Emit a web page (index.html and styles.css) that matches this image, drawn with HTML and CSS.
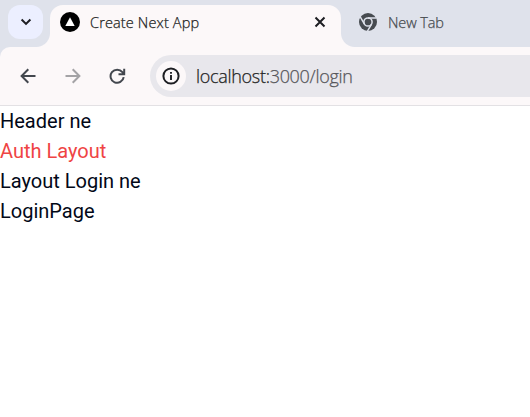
FILE: index.html
```html
<!DOCTYPE html>
<html lang="en">
<head>
<meta charset="utf-8">
<title>Create Next App</title>
<link rel="stylesheet" href="styles.css">
</head>
<body>
<header class="browser">
  <div class="tabs">
    <button class="tab-search" aria-label="Search tabs">
      <svg width="12" height="8" viewBox="0 0 12 8"><path d="M1.6 1.5 6 5.9l4.4-4.4" fill="none" stroke="#1d1e22" stroke-width="2"/></svg>
    </button>
    <div class="tab active">
      <svg class="favicon" width="20" height="20" viewBox="0 0 20 20"><circle cx="10" cy="10" r="10"/><path d="M10 5.2 14.7 14H5.3z" fill="#fff"/></svg>
      <span class="title title-active">Create Next App</span>
      <svg class="close" width="12" height="12" viewBox="0 0 12 12"><path d="m1.5 1.5 9 9m0-9-9 9" stroke="#1d1e22" stroke-width="2"/></svg>
    </div>
    <div class="tab inactive">
      <svg class="chrome" width="18" height="18" viewBox="0 0 18 18">
        <circle cx="9" cy="9" r="9" fill="#474b50"/>
        <circle cx="9" cy="9" r="4.1" fill="none" stroke="#dfe2eb" stroke-width="1.5"/>
        <path d="M9 4.9h8.4M12.55 11.05 8.35 18.3M5.45 11.05 1.25 3.8" stroke="#dfe2eb" stroke-width="1.5"/>
      </svg>
      <span class="title title-inactive">New Tab</span>
    </div>
  </div>
  <div class="toolbar">
    <svg class="back" width="16" height="16" viewBox="0 0 16 16"><path d="M15.5 8H2M8.3 1.3 1.6 8l6.7 6.7" fill="none" stroke="#43474e" stroke-width="2"/></svg>
    <svg class="forward" width="16" height="16" viewBox="0 0 16 16"><path d="M.5 8H14M7.7 1.3 14.4 8l-6.7 6.7" fill="none" stroke="#a4a3a6" stroke-width="2"/></svg>
    <svg class="reload" width="17" height="17" viewBox="0 0 17 17"><path d="M14.7 9.2A6.6 6.6 0 1 1 13.4 4.2L15 6M15.2.8V6.3H9.5" fill="none" stroke="#43474e" stroke-width="2"/></svg>
    <div class="address">
      <span class="info"><svg width="18" height="18" viewBox="0 0 18 18"><circle cx="9" cy="9" r="7.6" fill="none" stroke="#1d1e22" stroke-width="2"/><path d="M9 8v5M9 4.9v1.9" stroke="#1d1e22" stroke-width="1.9"/></svg></span>
      <span class="url"><span class="host">localhost:</span>3000/login</span>
    </div>
  </div>
</header>
<main class="page">
  <div>Header ne</div>
  <div class="auth">Auth Layout</div>
  <div>Layout Login ne</div>
  <div>LoginPage</div>
</main>
</body>
</html>
```

FILE: styles.css
```css
* { box-sizing: border-box; }
body { margin: 0; background: #fff; overflow: hidden; }
svg { display: block; flex: none; }
.browser { background: #dfe2eb; font-family: "Open Sans", "Noto Sans", sans-serif; }
.tabs { display: flex; height: 47px; padding: 5px 0 0 8px; }
.tab-search {
  display: flex; align-items: center; justify-content: center;
  width: 35px; height: 34px; margin-right: 7px; padding: 0;
  border: 0; border-radius: 12px; background: #ecefff;
}
.tab { display: flex; height: 42px; }
.active {
  position: relative; width: 291px; padding: 7px 15px 0 10px;
  border-radius: 13px 13px 0 0; background: #fcf8f9;
}
.active::before, .active::after {
  content: ""; position: absolute; bottom: 0; width: 14px; height: 14px;
}
.active::before { left: -14px; background: radial-gradient(circle at 0 0, transparent 13.5px, #fcf8f9 14.5px); }
.active::after { right: -14px; background: radial-gradient(circle at 100% 0, transparent 13.5px, #fcf8f9 14.5px); }
.close { margin: 4px 0 0 auto; }
.favicon { margin-right: 10px; }
.title {
  height: 20px; margin-top: 1px; font-size: 14.5px; line-height: 20px; font-weight: 300;
  white-space: nowrap; -webkit-text-stroke: 0.25px currentColor;
}
.title-active { color: #1d1e22; letter-spacing: 0.14px; }
.inactive { padding: 8px 0 0 18px; }
.chrome { margin-right: 11px; }
.title-inactive { margin-top: 0; color: #474b50; letter-spacing: -0.1px; }
.toolbar {
  display: flex; align-items: center; height: 59px; padding-left: 20px;
  border-bottom: 1px solid #e3e1e4; background: #fcf8f9;
  border-top-left-radius: 10px;
}
.forward { margin-left: 29px; }
.reload { margin-left: 28px; }
.address {
  display: flex; align-items: center; flex: 1; height: 42px; margin-left: 24px;
  padding-left: 6px; border-radius: 21px 0 0 21px; background: #e8e7ec;
}
.info {
  display: flex; align-items: center; justify-content: center;
  width: 30px; height: 30px; border-radius: 50%; background: #fcf8f9;
}
.url {
  margin-left: 10px; color: #56565a; font-size: 18px; line-height: 24px; font-weight: 300;
  letter-spacing: -0.3px; -webkit-text-stroke: 0.25px currentColor;
}
.host { color: #1d1e22; -webkit-text-stroke-color: #1d1e22; }
.page { color: #020817; font-family: Roboto, sans-serif; font-size: 20px; line-height: 30px; }
.auth { color: #ef4444; }
```
